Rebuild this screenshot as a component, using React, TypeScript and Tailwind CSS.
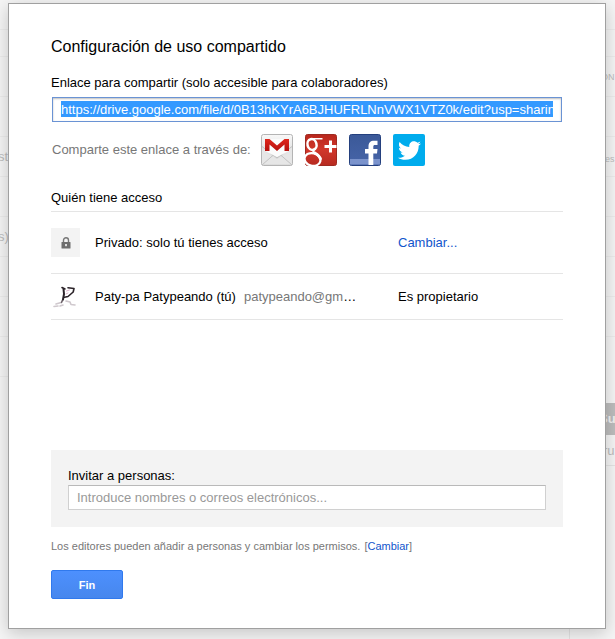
import type { ReactNode } from "react";
import { FaTwitter } from "react-icons/fa";

const shareUrl =
  "https://drive.google.com/file/d/0B13hKYrA6BJHUFRLNnVWX1VTZ0k/edit?usp=sharing";

const GmailIcon = () => (
  <svg viewBox="0 0 32 32" className="size-8">
    <defs>
      <linearGradient id="gmail-bg" x1="0" y1="0" x2="0" y2="1">
        <stop offset="0" stopColor="#f8f8f8" />
        <stop offset="1" stopColor="#d2d2d2" />
      </linearGradient>
      <linearGradient id="gmail-m" x1="0" y1="0" x2="0" y2="1">
        <stop offset="0" stopColor="#e0261c" />
        <stop offset="1" stopColor="#b5120f" />
      </linearGradient>
    </defs>
    <rect x=".5" y=".5" width="31" height="31" rx="2" fill="url(#gmail-bg)" stroke="#b4b4b4" />
    <path d="M1 13 4 11v7l12 7 12-7v-7l3 2v17.500H1z" fill="#e6e6e6" />
    <path d="M1 31 13.500 20M31 31 18.500 20" fill="none" stroke="#b8b8b8" strokeWidth=".8" />
    <path d="M1 12.500 16 24 31 12.500" fill="none" stroke="#b8b8b8" strokeWidth=".8" />
    <path d="M4 5h24v12L16 23 4 17z" fill="#fbfbfb" />
    <path d="M4 5h4.500L16 11.500 23.500 5H28v12h-4.500v-6.500L16 17l-7.500-6.500V17H4z" fill="url(#gmail-m)" />
  </svg>
);

const GooglePlusIcon = () => (
  <svg viewBox="0 0 32 32" className="size-8">
    <defs>
      <linearGradient id="gplus-bg" x1="0" y1="0" x2="0" y2="1">
        <stop offset="0" stopColor="#b9261c" />
        <stop offset=".5" stopColor="#d0372b" />
        <stop offset="1" stopColor="#b72a20" />
      </linearGradient>
      <clipPath id="gplus-clip">
        <rect width="32" height="32" rx="2" />
      </clipPath>
    </defs>
    <rect x=".5" y=".5" width="31" height="31" rx="2" fill="url(#gplus-bg)" stroke="#9e2a21" />
    <g fill="none" stroke="#fff" clipPath="url(#gplus-clip)">
      <ellipse cx="7" cy="10.500" rx="4.500" ry="5.500" strokeWidth="2.500" transform="rotate(-15 7 10.500)" />
      <path d="M7 4.800h10.500" strokeWidth="1.500" />
      <path d="M10.500 14.500c-2.500 1.500-3.200 3-.5 4.800" strokeWidth="2.200" />
      <ellipse cx="7.500" cy="25.500" rx="8" ry="6.300" strokeWidth="2.200" transform="rotate(14 7.500 25.500)" />
      <path d="M9.500 18.800c3.500 2 6 4 6 7" strokeWidth="2.800" />
      <path d="M25.500 6.500v12M19.500 12.500h12" strokeWidth="3" />
    </g>
  </svg>
);

const FacebookIcon = () => (
  <svg viewBox="0 0 32 32" className="size-8">
    <defs>
      <linearGradient id="fb-bg" x1="0" y1="0" x2="0" y2="1">
        <stop offset="0" stopColor="#3b5998" />
        <stop offset="1" stopColor="#4664a8" />
      </linearGradient>
    </defs>
    <rect x=".5" y=".5" width="31" height="31" rx="2" fill="url(#fb-bg)" stroke="#24407e" />
    <path d="M1 25h30v5.500H1z" fill="#7b93cc" />
    <path
      d="M19.500 31V19.500H16V15h3.500v-2.500c0-4 2-5.800 5.500-5.800h3.500V11H26c-1.300 0-1.700.6-1.700 1.800V15h4.200l-.5 4.500h-3.700V31z"
      fill="#fff"
    />
  </svg>
);

const TwitterIcon = () => (
  <span className="flex size-8 items-center justify-center rounded-xs bg-[#00aced] text-white">
    <FaTwitter size={23} />
  </span>
);

const LockIcon = () => (
  <svg viewBox="0 0 10 12" className="h-3 w-[10px]">
    <path d="M2.500 5.500V3.300a2.500 2.500 0 0 1 5 0v2.200" fill="none" stroke="#777" strokeWidth="1.400" />
    <rect x=".5" y="5" width="9" height="6.500" rx=".6" fill="#6e6e6e" />
    <rect x="4" y="7" width="2" height="2.200" fill="#ddd" />
  </svg>
);

const Avatar = () => (
  <svg viewBox="0 0 29 29" className="size-[29px]">
    <g fill="none" strokeLinecap="round" strokeLinejoin="round">
      <path d="M3 24.500l4-.5M5 22l5-1.500 2-2M15 19l4 1 1 2.500 4 .5M9 24l3-1" stroke="#cfc8cd" strokeWidth="1.600" />
      <path d="M11.500 18l-1 2.500" stroke="#6f656d" strokeWidth="1.500" />
      <path d="M12.500 7 13 12l-1 5.500" stroke="#2a2228" strokeWidth="2" />
      <path d="M11 5.500l3 1.500M17 5.800l6 .7-.8 3.500L17 14.500l-3.500.8" stroke="#2a2228" strokeWidth="1.600" />
      <path d="M15.500 9l3-1M15 12l2-1" stroke="#dcb3cb" />
    </g>
  </svg>
);

const services = [
  { name: "Gmail", icon: <GmailIcon /> },
  { name: "Google+", icon: <GooglePlusIcon /> },
  { name: "Facebook", icon: <FacebookIcon /> },
  { name: "Twitter", icon: <TwitterIcon /> },
];

const BackRow = ({ children }: { children?: ReactNode }) => (
  <div className="flex h-10 items-center border-b border-[#ececec]">{children}</div>
);

// Dimmed document list behind the dialog
const Backdrop = () => (
  <div
    aria-hidden="true"
    className="col-start-1 row-start-1 flex justify-between overflow-hidden bg-[#f5f5f5] text-[13px] text-[#bcbcbc]"
  >
    <div className="flex w-2 flex-col">
      <div className="h-[30px] border-b border-[#ececec]" />
      <div className="h-[27px] border-b border-[#ececec]" />
      <BackRow />
      <BackRow />
      <BackRow>
        <span className="-ml-[2px]">st</span>
      </BackRow>
      <BackRow />
      <BackRow>
        <span className="-ml-[2px]">s)</span>
      </BackRow>
      <BackRow />
      <BackRow />
      <BackRow />
    </div>
    <div className="flex w-[46px] flex-col">
      <div className="h-[30px] border-b border-[#ececec]" />
      <div className="h-[27px] border-b border-[#ececec]" />
      <BackRow>
        <span className="ml-8 text-[9px]">ON</span>
      </BackRow>
      <BackRow />
      <BackRow>
        <span className="mt-1 ml-9 text-[9px]">es</span>
      </BackRow>
      <BackRow />
      <BackRow />
      <BackRow />
      <BackRow />
      <div className="mt-[66px] h-8 bg-[#bdbdbd] pl-[30px] leading-8 font-bold text-[#f0f0f0]">Su</div>
      <div className="h-[31px] border-b border-[#e4e4e4] pl-[34px] leading-[31px]">ru</div>
      <div className="flex-1 border-l border-[#e4e4e4]" />
    </div>
  </div>
);

export default function App() {
  return (
    <main className="grid min-h-screen grid-cols-1 font-['Liberation_Sans',Arial,sans-serif] text-[13px] leading-4 text-black">
      <Backdrop />
      <div
        role="dialog"
        aria-labelledby="dialog-title"
        className="relative col-start-1 row-start-1 mt-[3px] mr-[9px] mb-[9px] ml-2 self-start border border-[#a0a0a0] bg-white px-[42px] pt-[33px] pb-[29px] shadow-[0_4px_16px_rgba(0,0,0,0.2)]"
      >
        <h1 id="dialog-title" className="text-base leading-5">
          Configuración de uso compartido
        </h1>

        <label htmlFor="share-link" className="mt-[18px] block">
          Enlace para compartir (solo accesible para colaboradores)
        </label>
        <div className="mt-[6px] flex px-px">
          <input
            id="share-link"
            readOnly
            value={shareUrl}
            className="h-[25px] w-full border border-[#6a93d4] bg-[#3399ff] bg-clip-content px-2 pt-[3px] pb-1 text-white shadow-[inset_0_1px_2px_rgba(0,0,0,0.25)] outline-none"
          />
        </div>

        <div className="mt-3 flex items-center gap-3">
          <span className="w-[198px] pl-px whitespace-nowrap text-[#777]">
            Comparte este enlace a través de:
          </span>
          {services.map((service) => (
            <a key={service.name} href="#" aria-label={service.name}>
              {service.icon}
            </a>
          ))}
        </div>

        <h2 className="mt-[22px] h-6 border-b border-[#e5e5e5] leading-5">Quién tiene acceso</h2>
        <ul className="mb-[130px]">
          <li className="grid h-[62px] grid-cols-[1fr_165px] items-center border-b border-[#e5e5e5]">
            <div className="flex items-center gap-[15px]">
              <span className="flex size-[29px] items-center justify-center bg-[#f3f3f3]">
                <LockIcon />
              </span>
              <span>Privado: solo tú tienes acceso</span>
            </div>
            <a href="#" className="text-[#1155cc]">
              Cambiar...
            </a>
          </li>
          <li className="grid h-[46px] grid-cols-[1fr_165px] items-center border-b border-[#e5e5e5]">
            <div className="flex min-w-0 items-center gap-[15px] pr-10">
              <span className="shrink-0">
                <Avatar />
              </span>
              <span className="truncate">
                Paty-pa Patypeando (tú)
                <span className="ml-2 text-[#777]">patypeando@gmail.com</span>
              </span>
            </div>
            <span>Es propietario</span>
          </li>
        </ul>

        <div className="bg-[#f3f3f3] px-[17px] pt-[18px] pb-[17px]">
          <label htmlFor="invite" className="block">
            Invitar a personas:
          </label>
          <input
            id="invite"
            type="text"
            placeholder="Introduce nombres o correos electrónicos..."
            className="mt-px block h-[25px] w-full border border-[#d0d0d0] border-t-[#b9b9b9] bg-white px-2 placeholder:text-[#999]"
          />
        </div>

        <p className="mt-[11px] text-[11px] leading-4 text-[#777]">
          Los editores pueden añadir a personas y cambiar los permisos.
          <span className="ml-1">
            [
            <a href="#" className="text-[#1155cc]">
              Cambiar
            </a>
            ]
          </span>
        </p>

        <button
          type="button"
          className="mt-4 block h-[29px] w-[72px] rounded-xs border border-[#3079ed] bg-linear-to-b from-[#4d90fe] to-[#4787ed] text-[11px] font-bold text-white"
        >
          Fin
        </button>
      </div>
    </main>
  );
}
